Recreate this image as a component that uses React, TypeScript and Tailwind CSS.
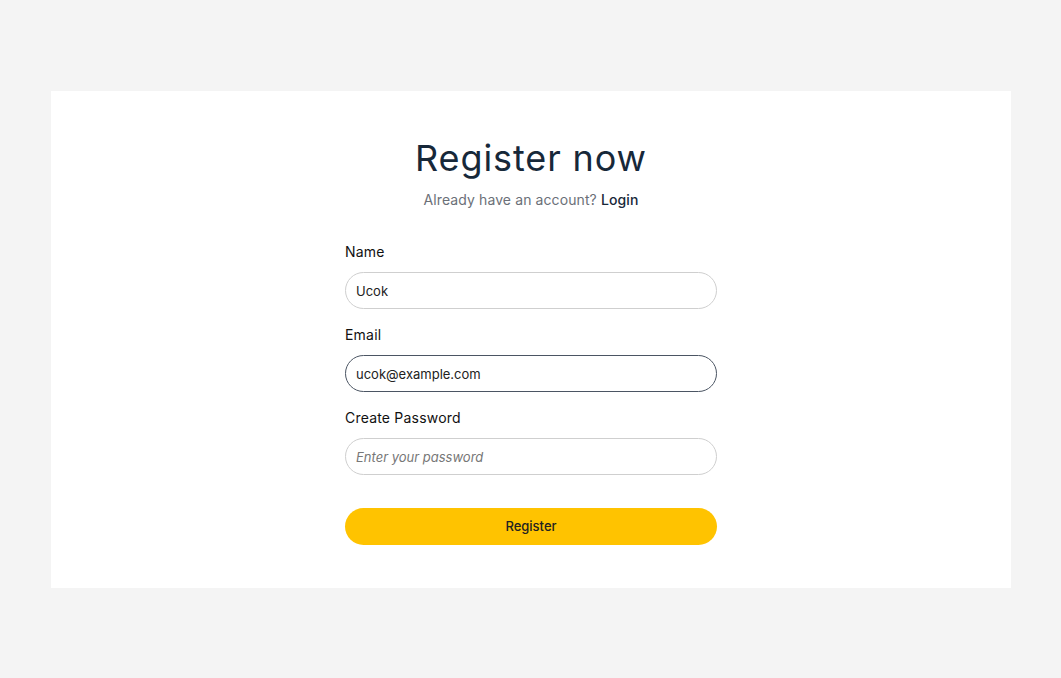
import React from "react";

export default function App() {
  return (
    <div
      className="min-h-[678px] w-full bg-[#f4f4f4] pt-[91px] px-[51px]"
      style={{ fontFamily: "Inter, 'Noto Sans', sans-serif" }}
    >
      <div className="w-[960px] h-[497px] bg-white pt-[45px] flex flex-col items-center">
        <h1 className="text-[36px] leading-[44px] text-[#172839] font-normal tracking-[0.9px]">
          Register now
        </h1>
        <p className="mt-[10px] text-[14px] leading-[20px] text-[#6b7078] tracking-[0.1px]">
          Already have an account?{" "}
          <a className="text-[#172839] font-medium">Login</a>
        </p>
        <form className="mt-[32px] w-[372px] flex flex-col">
          <label className="text-[14px] leading-[20px] text-[#111] tracking-[0.2px]">Name</label>
          <input
            className="mt-[10px] h-[37px] rounded-full border border-[#cfcfcf] px-[10px] text-[13px] text-[#222] outline-none"
            defaultValue="Ucok"
          />
          <label className="mt-[16px] text-[14px] leading-[20px] text-[#111] tracking-[0.2px]">Email</label>
          <input
            className="mt-[10px] h-[37px] rounded-full border border-[#4b5563] px-[10px] text-[13px] text-[#222] outline-none"
            defaultValue="ucok@example.com"
          />
          <label className="mt-[16px] text-[14px] leading-[20px] text-[#111] tracking-[0.2px]">
            Create Password
          </label>
          <input
            type="password"
            className="mt-[10px] h-[37px] rounded-full border border-[#cfcfcf] px-[10px] text-[13px] text-[#222] outline-none placeholder:italic placeholder:text-[#777]"
            placeholder="Enter your password"
          />
          <button
            type="button"
            className="mt-[33px] h-[37px] rounded-full bg-[#ffc300] text-[13px] font-medium text-[#222]"
          >
            Register
          </button>
        </form>
      </div>
    </div>
  );
}
